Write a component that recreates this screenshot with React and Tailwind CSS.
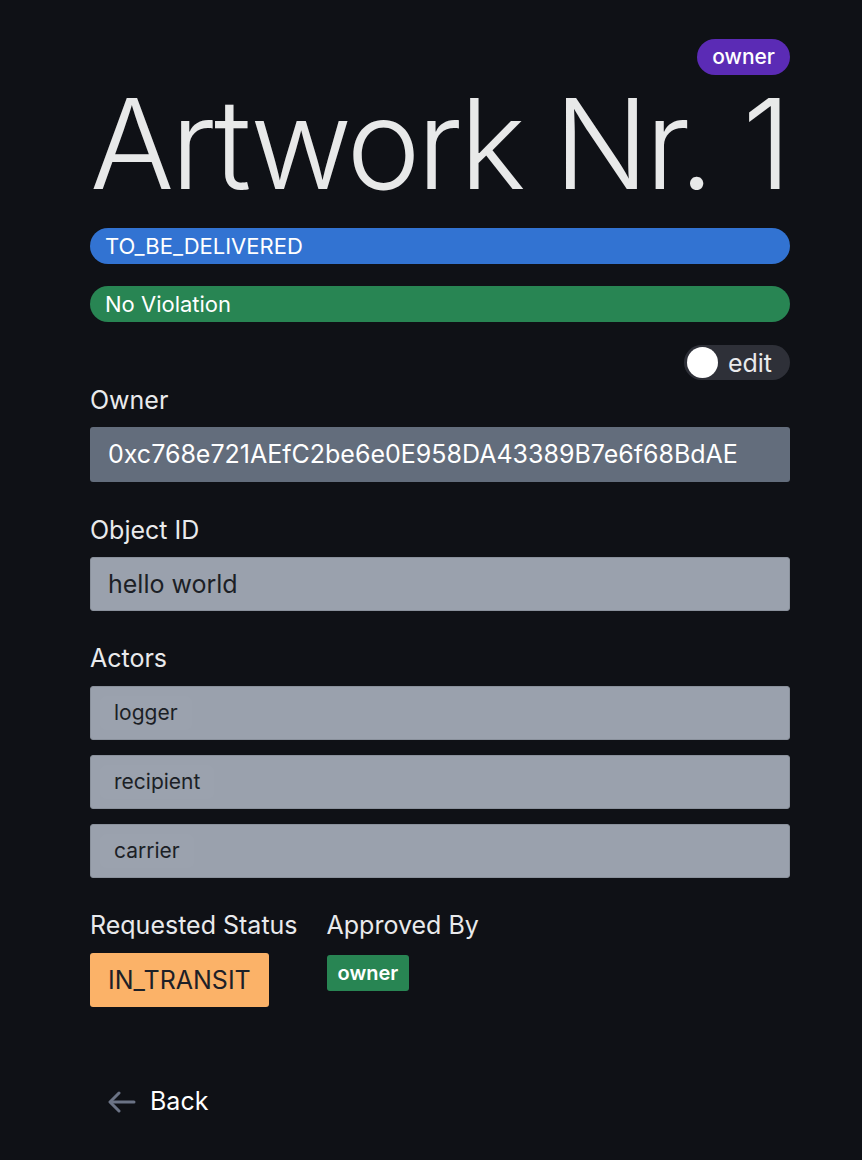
import React, { useState } from 'react';

const actors = ['logger', 'recipient', 'carrier'];

const Label = ({ children }) => (
  <div className="text-[25px] leading-[30px] text-[#e9eaec]">{children}</div>
);

const App = () => {
  const [editing, setEditing] = useState(false);

  return (
    <div
      className="min-h-[1160px] bg-[#0f1116] text-[#eceeef]"
      style={{ fontFamily: 'Inter, "Noto Sans", sans-serif' }}
    >
      <div className="ml-[90px] w-[700px] pt-[39px]">
        {/* header */}
        <div className="flex justify-end">
          <span className="h-[36px] px-[15px] rounded-full bg-[#5b2bb5] text-white text-[21px] font-medium leading-[36px]">
            owner
          </span>
        </div>
        <h1 className="-mt-[1px] text-[125px] leading-[140px] font-light tracking-[-3.5px] text-[#e8e9e9] whitespace-nowrap">
          Artwork Nr. 1
        </h1>

        {/* status bars */}
        <div className="mt-[14px] h-[36px] rounded-full bg-[#3273d2] px-[15px] text-[22px] leading-[36px] text-white">
          TO_BE_DELIVERED
        </div>
        <div className="mt-[22px] h-[36px] rounded-full bg-[#288553] px-[15px] text-[22px] leading-[36px] text-white">
          No Violation
        </div>

        {/* edit toggle */}
        <div className="mt-[23px] flex justify-end">
          <button
            onClick={() => setEditing(!editing)}
            className="flex h-[35px] items-center gap-[10px] rounded-full bg-[#2e3038] pl-[3px] pr-[18px]"
          >
            <span className="h-[31px] w-[31px] rounded-full bg-white" />
            <span className="text-[25px] leading-[30px] text-[#e9eaec]">edit</span>
          </button>
        </div>

        {/* owner */}
        <div className="mt-[5px]">
          <Label>Owner</Label>
          <div className="mt-[12px] h-[55px] rounded-[3px] bg-[#636d7c] px-[18px] text-[25px] leading-[55px] text-white">
            0xc768e721AEfC2be6e0E958DA43389B7e6f68BdAE
          </div>
        </div>

        {/* object id */}
        <div className="mt-[33px]">
          <Label>Object ID</Label>
          <div className="mt-[12px] h-[54px] rounded-[3px] border border-[#8a919c] bg-[#9aa1ad] px-[17px] text-[25px] leading-[52px] text-[#1c1f26]">
            hello world
          </div>
        </div>

        {/* actors */}
        <div className="mt-[32px]">
          <Label>Actors</Label>
          <div className="mt-[13px] flex flex-col gap-[15px]">
            {actors.map((a) => (
              <div
                key={a}
                className="flex h-[54px] items-center rounded-[3px] border border-[#8a919c] bg-[#9aa1ad] px-[9px]"
              >
                <span className="rounded-[6px] bg-[#9ba2ae] px-[14px] py-[3px] text-[21px] leading-[28px] text-[#1c1f26]">
                  {a}
                </span>
              </div>
            ))}
          </div>
        </div>

        {/* requested status / approved by */}
        <div className="mt-[32px] flex gap-[29px]">
          <div>
            <Label>Requested Status</Label>
            <div className="mt-[13px] inline-block h-[54px] rounded-[3px] bg-[#fbb268] px-[18px] text-[25px] leading-[54px] text-[#1d2027]">
              IN_TRANSIT
            </div>
          </div>
          <div>
            <Label>Approved By</Label>
            <div className="mt-[15px] inline-block h-[36px] rounded-[3px] bg-[#288553] px-[11px] text-[20px] font-semibold leading-[36px] text-white">
              owner
            </div>
          </div>
        </div>

        {/* back */}
        <button className="mt-[76px] ml-[18px] flex items-center gap-[14px] text-[25px] text-white">
          <svg width="28" height="24" viewBox="0 0 28 24" fill="none" stroke="#6b7385" strokeWidth="3" strokeLinecap="round" strokeLinejoin="round">
            <path d="M26 12H3" />
            <path d="M11 3l-9 9 9 9" />
          </svg>
          Back
        </button>
      </div>
    </div>
  );
};

export default App;
